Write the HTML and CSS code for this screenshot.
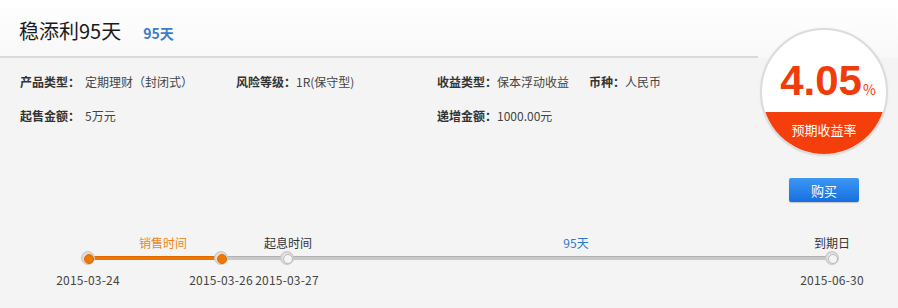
FILE: index.html
```html
<!DOCTYPE html>
<html lang="zh-CN">
<head>
<meta charset="UTF-8" />
<title>稳添利95天</title>
<link rel="stylesheet" href="styles.css">
</head>
<body>
<div class="product">
  <div class="header">
    <h1 class="title">稳添利95天</h1>
    <span class="term">95天</span>
  </div>

  <div class="info">
    <div class="item first"><b>产品类型：</b>定期理财（封闭式）</div>
    <div class="item"><b>风险等级：</b>1R(保守型)</div>
    <div class="item"><b>收益类型：</b>保本浮动收益</div>
    <div class="item"><b>币种：</b>人民币</div>
    <div class="item first"><b>起售金额：</b>5万元</div>
    <div class="item"></div>
    <div class="item"><b>递增金额：</b>1000.00元</div>
  </div>

  <div class="side">
    <div class="rate">
      <div class="rate-top"><span class="num">4.05</span><span class="pct">%</span></div>
      <div class="rate-bottom">预期收益率</div>
    </div>
    <button class="buy">购买</button>
  </div>

  <div class="timeline">
    <div class="track"></div>
    <div class="track done" style="width: 133px;"></div>

    <span class="label sale" style="left: 163px;">销售时间</span>
    <span class="label" style="left: 288px;">起息时间</span>
    <span class="label days" style="left: 576px;">95天</span>
    <span class="label" style="left: 832px;">到期日</span>

    <div class="node on" style="left: 88px;"><i></i><span class="date">2015-03-24</span></div>
    <div class="node on" style="left: 221px;"><i></i><span class="date">2015-03-26</span></div>
    <div class="node" style="left: 287px;"><i></i><span class="date">2015-03-27</span></div>
    <div class="node" style="left: 832px;"><i></i><span class="date">2015-06-30</span></div>
  </div>
</div>
</body>
</html>
```

FILE: styles.css
```css
* {
  box-sizing: border-box;
}
body {
  margin: 0;
  background: #f4f4f4;
  font-family: "Noto Sans CJK SC", "Microsoft YaHei", sans-serif;
  font-size: 12px;
  color: #333;
}
.product {
  position: relative;
  width: 898px;
  height: 308px;
}

/* header */
.header {
  position: relative;
  display: flex;
  align-items: baseline;
  height: 58px;
  padding: 16px 0 0 19px;
  background: linear-gradient(#fff, #f8f8f8);
}
.header::after {
  content: "";
  position: absolute;
  left: 0;
  right: 140px;
  bottom: 0;
  height: 2px;
  background: #dadada;
}
.title {
  margin: 0;
  font-size: 20px;
  font-weight: normal;
  color: #1a1a1a;
}
.term {
  margin-left: 22px;
  font-size: 14px;
  font-weight: bold;
  color: #3b7dcc;
}

/* info rows */
.info {
  display: grid;
  grid-template-columns: 216px 201px 152px auto;
  grid-auto-rows: 34px;
  padding: 7px 0 0 20px;
  width: 740px;
}
.item {
  line-height: 34px;
  white-space: nowrap;
  color: #444;
}
.item b {
  color: #333;
}
.item.first b {
  margin-right: 5px;
}

/* rate circle + button */
.side {
  position: absolute;
  top: 28px;
  right: 10px;
  width: 128px;
  display: flex;
  flex-direction: column;
  align-items: center;
}
.rate {
  width: 128px;
  height: 128px;
  border-radius: 50%;
  border: 2px solid #dcdcdc;
  overflow: hidden;
  background: #fff;
  box-shadow: 0 0 2px rgba(0,0,0,0.08);
  display: flex;
  flex-direction: column;
}
.rate-top {
  height: 82px;
  display: flex;
  align-items: baseline;
  justify-content: center;
  padding-top: 30px;
  padding-left: 8px;
  color: #f03c0a;
}
.num {
  font-family: "Liberation Sans", Arial, sans-serif;
  font-size: 42px;
  font-weight: bold;
  line-height: 42px;
}
.pct {
  font-size: 14px;
  margin-left: 1px;
}
.rate-bottom {
  flex: 1;
  background: #f43f0c;
  color: #fff;
  font-size: 13px;
  text-align: center;
  line-height: 36px;
}
.buy {
  margin-top: 22px;
  width: 70px;
  height: 24px;
  border: none;
  border-radius: 2px;
  background: linear-gradient(#3d97f3, #176fdf);
  box-shadow: 0 1px 1px rgba(0,0,0,0.2);
  color: #fff;
  font-family: inherit;
  font-size: 13px;
  padding: 0;
  cursor: pointer;
}

/* timeline */
.timeline {
  position: absolute;
  left: 0;
  top: 230px;
  width: 898px;
  height: 70px;
}
.track {
  position: absolute;
  left: 88px;
  top: 26px;
  width: 744px;
  height: 4px;
  background: #c9c9c9;
  border-top: 1px solid #b0b0b0;
}
.track.done {
  background: #f07700;
  border-top-color: #e06a00;
}
.label {
  position: absolute;
  top: 4px;
  transform: translateX(-50%);
  white-space: nowrap;
  color: #333;
}
.label.sale {
  color: #f08519;
}
.label.days {
  color: #2a78d2;
}
.node {
  position: absolute;
  top: 21px;
  width: 0;
}
.node i {
  position: absolute;
  left: -7px;
  top: 0;
  width: 14px;
  height: 14px;
  border-radius: 50%;
  background: radial-gradient(#eee 30%, #c4c4c4 100%);
  border: 1px solid #c8c8c8;
}
.node i::after {
  content: "";
  position: absolute;
  left: 2px;
  top: 2px;
  width: 8px;
  height: 8px;
  border-radius: 50%;
  background: #f4f4f4;
  border: 1px solid #bbb;
}
.node.on i::after {
  background: #f07700;
  border-color: #e06a00;
}
.date {
  position: absolute;
  top: 20px;
  left: 0;
  transform: translateX(-50%);
  white-space: nowrap;
  letter-spacing: 0.2px;
  color: #444;
}
```
